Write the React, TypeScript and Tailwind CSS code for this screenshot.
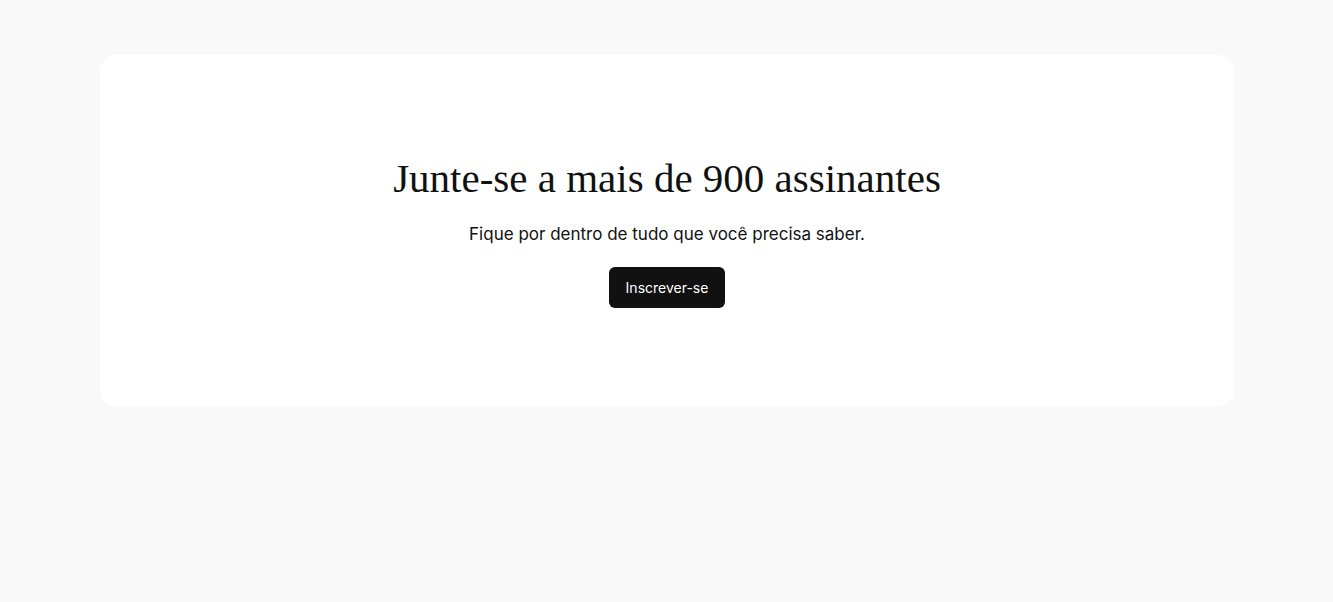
export default function App() {
  return (
    <div className="min-h-screen bg-[#f9f9f9] pt-[55px] pl-[100px] pr-[99px]">
      <section className="bg-white rounded-2xl pt-[99px] pb-[98px] flex flex-col items-center text-center">
        <h2 className="text-[41px] leading-[48px] text-[#111] font-['Liberation_Serif',serif]">
          Junte-se a mais de 900 assinantes
        </h2>
        <p className="mt-[19px] text-[17px] leading-[26px] text-[#111] font-['Inter',sans-serif]">
          Fique por dentro de tudo que você precisa saber.
        </p>
        <button className="mt-[20px] h-[41px] px-[17px] rounded-md bg-[#111] text-white text-[14px] font-['Inter',sans-serif]">
          Inscrever-se
        </button>
      </section>
    </div>
  )
}
